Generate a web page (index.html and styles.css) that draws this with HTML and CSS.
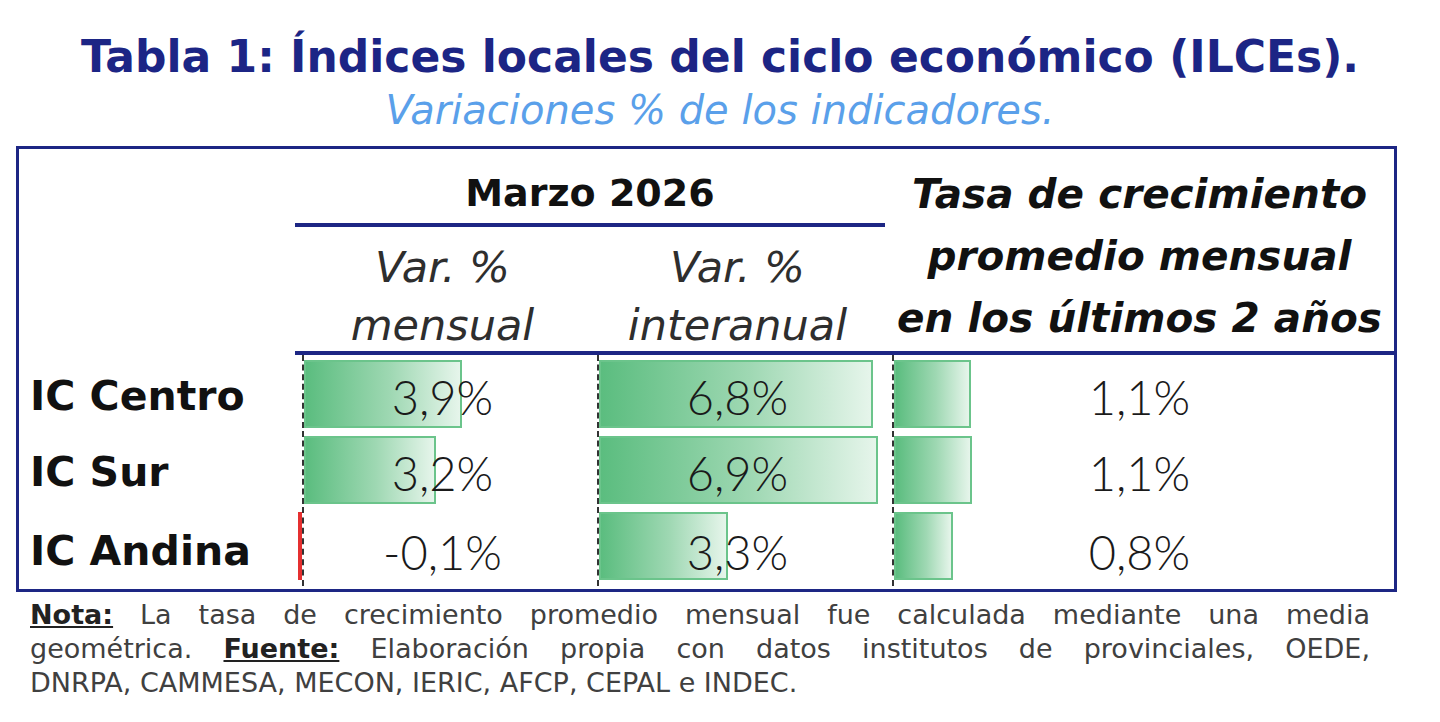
FILE: index.html
```html
<!DOCTYPE html>
<html lang="es">
<head>
<meta charset="utf-8">
<title>Tabla 1</title>
<link rel="stylesheet" href="styles.css">
</head>
<body>
<div class="page">
  <h1 class="title">Tabla 1: Índices locales del ciclo económico (ILCEs).</h1>
  <p class="subtitle">Variaciones % de los indicadores.</p>

  <div class="box">
    <div class="h-empty"></div>
    <div class="h-month">Marzo 2026</div>
    <div class="h-rate">Tasa de crecimiento<br>promedio mensual<br>en los últimos 2 años</div>
    <div class="h-var h-var1">Var. %<br>mensual</div>
    <div class="h-var h-var2">Var. %<br>interanual</div>

    <div class="label">IC Centro</div>
    <div class="cell"><span class="bar" style="width:158px"></span><span class="val">3,9%</span></div>
    <div class="cell"><span class="bar" style="width:274px"></span><span class="val">6,8%</span></div>
    <div class="cell"><span class="bar" style="width:77px"></span><span class="val">1,1%</span></div>

    <div class="label">IC Sur</div>
    <div class="cell"><span class="bar" style="width:132px"></span><span class="val">3,2%</span></div>
    <div class="cell"><span class="bar" style="width:279px"></span><span class="val">6,9%</span></div>
    <div class="cell"><span class="bar" style="width:78px"></span><span class="val">1,1%</span></div>

    <div class="label">IC Andina</div>
    <div class="cell"><span class="bar neg" style="width:4px"></span><span class="val">-0,1%</span></div>
    <div class="cell"><span class="bar" style="width:129px"></span><span class="val">3,3%</span></div>
    <div class="cell"><span class="bar" style="width:59px"></span><span class="val">0,8%</span></div>
  </div>

  <div class="note">
    <span class="line"><b>Nota:</b> La tasa de crecimiento promedio mensual fue calculada mediante una media</span>
    <span class="line">geométrica. <b>Fuente:</b> Elaboración propia con datos institutos de provinciales, OEDE,</span>
    <span class="line last">DNRPA, CAMMESA, MECON, IERIC, AFCP, CEPAL e INDEC.</span>
  </div>
</div>
</body>
</html>
```

FILE: styles.css
```css
html, body {
  margin: 0;
  padding: 0;
  background: #ffffff;
}

.page {
  width: 1440px;
  height: 722px;
  font-family: "DejaVu Sans", "Noto Sans", sans-serif;
  color: #111;
  padding-top: 29px;
  box-sizing: border-box;
}

.title {
  margin: 0;
  text-align: center;
  font-size: 44px;
  line-height: 56px;
  font-weight: 700;
  color: #1c2585;
}

.subtitle {
  margin: -4px 0 0 0;
  text-align: center;
  font-size: 40px;
  line-height: 58px;
  font-style: italic;
  font-weight: 200;
  color: #5aa0ea;
}

.box {
  margin: 7px 0 0 16px;
  width: 1381px;
  height: 446px;
  box-sizing: border-box;
  border: 3px solid #1d2684;
  display: grid;
  grid-template-columns: 276px 295px 295px 1fr;
  grid-template-rows: 78px 128px 76px 76px 1fr;
}

.h-empty {
  grid-column: 1;
  grid-row: 1 / 3;
}

.h-month {
  grid-column: 2 / 4;
  grid-row: 1;
  border-bottom: 4px solid #1d2684;
  text-align: center;
  font-weight: 700;
  font-size: 38px;
  line-height: 60px;
  padding-top: 14px;
}

.h-rate {
  grid-column: 4;
  grid-row: 1 / 3;
  border-bottom: 4px solid #1d2684;
  text-align: center;
  font-weight: 700;
  font-style: italic;
  font-size: 40.5px;
  line-height: 62px;
  padding-top: 14px;
}

.h-var {
  grid-row: 2;
  border-bottom: 4px solid #1d2684;
  text-align: center;
  font-style: italic;
  font-weight: 200;
  font-size: 43px;
  line-height: 58px;
  padding-top: 11px;
  color: #2e2e2e;
}

.h-var1 { grid-column: 2; }
.h-var2 { grid-column: 3; }

.label {
  grid-column: 1;
  display: flex;
  align-items: center;
  padding-left: 11px;
  padding-top: 6px;
  font-weight: 700;
  font-size: 41px;
}

.cell {
  position: relative;
  display: flex;
  align-items: center;
  justify-content: center;
  padding-top: 8px;
}

.cell::before {
  content: "";
  position: absolute;
  left: 7px;
  top: 0;
  bottom: 3px;
  border-left: 2px dashed #333;
}

.bar {
  position: absolute;
  left: 9px;
  top: 5px;
  height: 68px;
  box-sizing: border-box;
  border: 2px solid #6bc48b;
  background: linear-gradient(to right, #5bbd7f 0%, #9fd8b3 55%, #e6f5eb 100%);
}

.bar.neg {
  left: 3px;
  border: none;
  background: #e53030;
}

.val {
  position: relative;
  font-family: "Lato", "DejaVu Sans", sans-serif;
  font-size: 47px;
  font-weight: 300;
  color: #1a1a1a;
}

.note {
  margin: 6px 0 0 30px;
  width: 1340px;
  font-size: 27px;
  line-height: 34px;
  color: #404040;
}

.note .line {
  display: block;
  text-align: justify;
  text-align-last: justify;
}

.note .line.last {
  text-align-last: left;
}

.note b {
  text-decoration: underline;
  color: #222;
}
```
